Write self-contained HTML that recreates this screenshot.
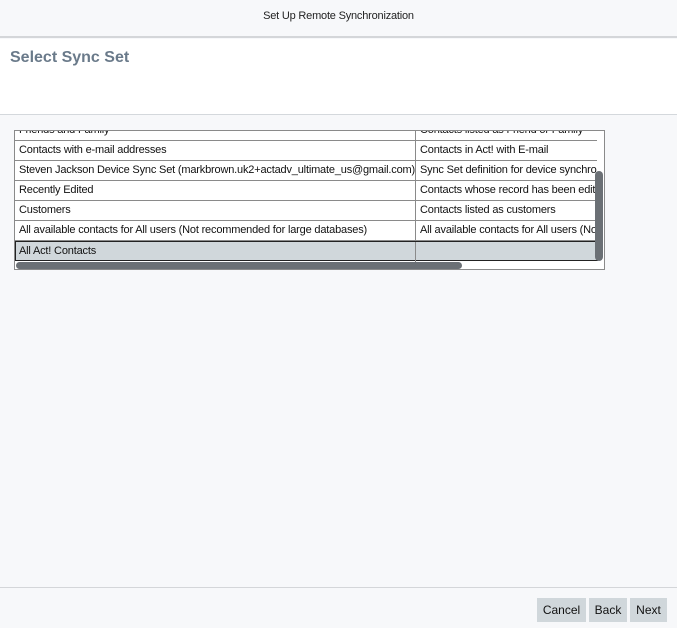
<!DOCTYPE html>
<html><head><style>
body{margin:0;width:677px;height:628px;background:#f7f8fa;font-family:"Liberation Sans",sans-serif;position:relative;overflow:hidden}
.hdr{position:absolute;left:0;top:0;width:677px;height:36px;background:#f7f8fa;border-bottom:2px solid #d4d6d9;text-align:center;font-size:11px;line-height:33px;color:#222;letter-spacing:-0.2px}
.panel{position:absolute;left:0;top:39px;width:677px;height:75px;background:#fff;border-bottom:1px solid #d4d8dc}
.panel h1{margin:0;position:absolute;left:10px;top:10px;font-size:16px;font-weight:bold;color:#6a7a8a}
.tbl{position:absolute;left:14px;top:130px;width:589px;height:138px;border:1px solid #8a8a8a;overflow:hidden;background:#fff}
.row{position:absolute;left:0;width:582px;height:19px;border-bottom:1px solid #8a8a8a;font-size:11px;color:#111;line-height:19px;letter-spacing:-0.18px}
.row span{position:absolute;top:0;white-space:nowrap;overflow:hidden}
.c1{left:4px;width:396px}.c2{left:405px;width:177px}
.row:before{content:"";position:absolute;left:400px;top:0;height:20px;border-left:1px solid #8a8a8a}
.sel{background:#d0d7db;border:1px solid #222;height:18px;left:0;width:581px}
.sel:before{left:399px}
.sel .c1{left:3px}
.vs{position:absolute;left:580px;top:40px;width:8px;height:90px;background:#6b7075;border-radius:4px}
.hs{position:absolute;left:1px;top:131px;width:446px;height:7px;background:#6b7075;border-radius:4px}
.foot{position:absolute;left:0;top:587px;width:677px;border-top:1px solid #d4d6d9}
.btn{position:absolute;top:598px;height:24px;background:#d0d7db;font-size:12px;line-height:24px;text-align:center;color:#111}
</style></head><body>
<div class="hdr">Set Up Remote Synchronization</div>
<div class="panel"><h1>Select Sync Set</h1></div>
<div class="tbl">
<div class="row" style="top:-10px"><span class="c1">Friends and Family</span><span class="c2">Contacts listed as Friend or Family</span></div>
<div class="row" style="top:10px"><span class="c1">Contacts with e-mail addresses</span><span class="c2">Contacts in Act! with E-mail</span></div>
<div class="row" style="top:30px"><span class="c1">Steven Jackson Device Sync Set (markbrown.uk2+actadv_ultimate_us@gmail.com)</span><span class="c2">Sync Set definition for device synchronization</span></div>
<div class="row" style="top:50px"><span class="c1">Recently Edited</span><span class="c2">Contacts whose record has been edited</span></div>
<div class="row" style="top:70px"><span class="c1">Customers</span><span class="c2">Contacts listed as customers</span></div>
<div class="row" style="top:90px"><span class="c1">All available contacts for All users (Not recommended for large databases)</span><span class="c2">All available contacts for All users (Not recommended)</span></div>
<div class="row sel" style="top:110px"><span class="c1">All Act! Contacts</span><span class="c2"></span></div>
<div class="vs"></div><div class="hs"></div>
</div>
<div class="foot"></div>
<div class="btn" style="left:537px;width:49px">Cancel</div>
<div class="btn" style="left:589px;width:38px">Back</div>
<div class="btn" style="left:630px;width:37px">Next</div>
</body></html>
